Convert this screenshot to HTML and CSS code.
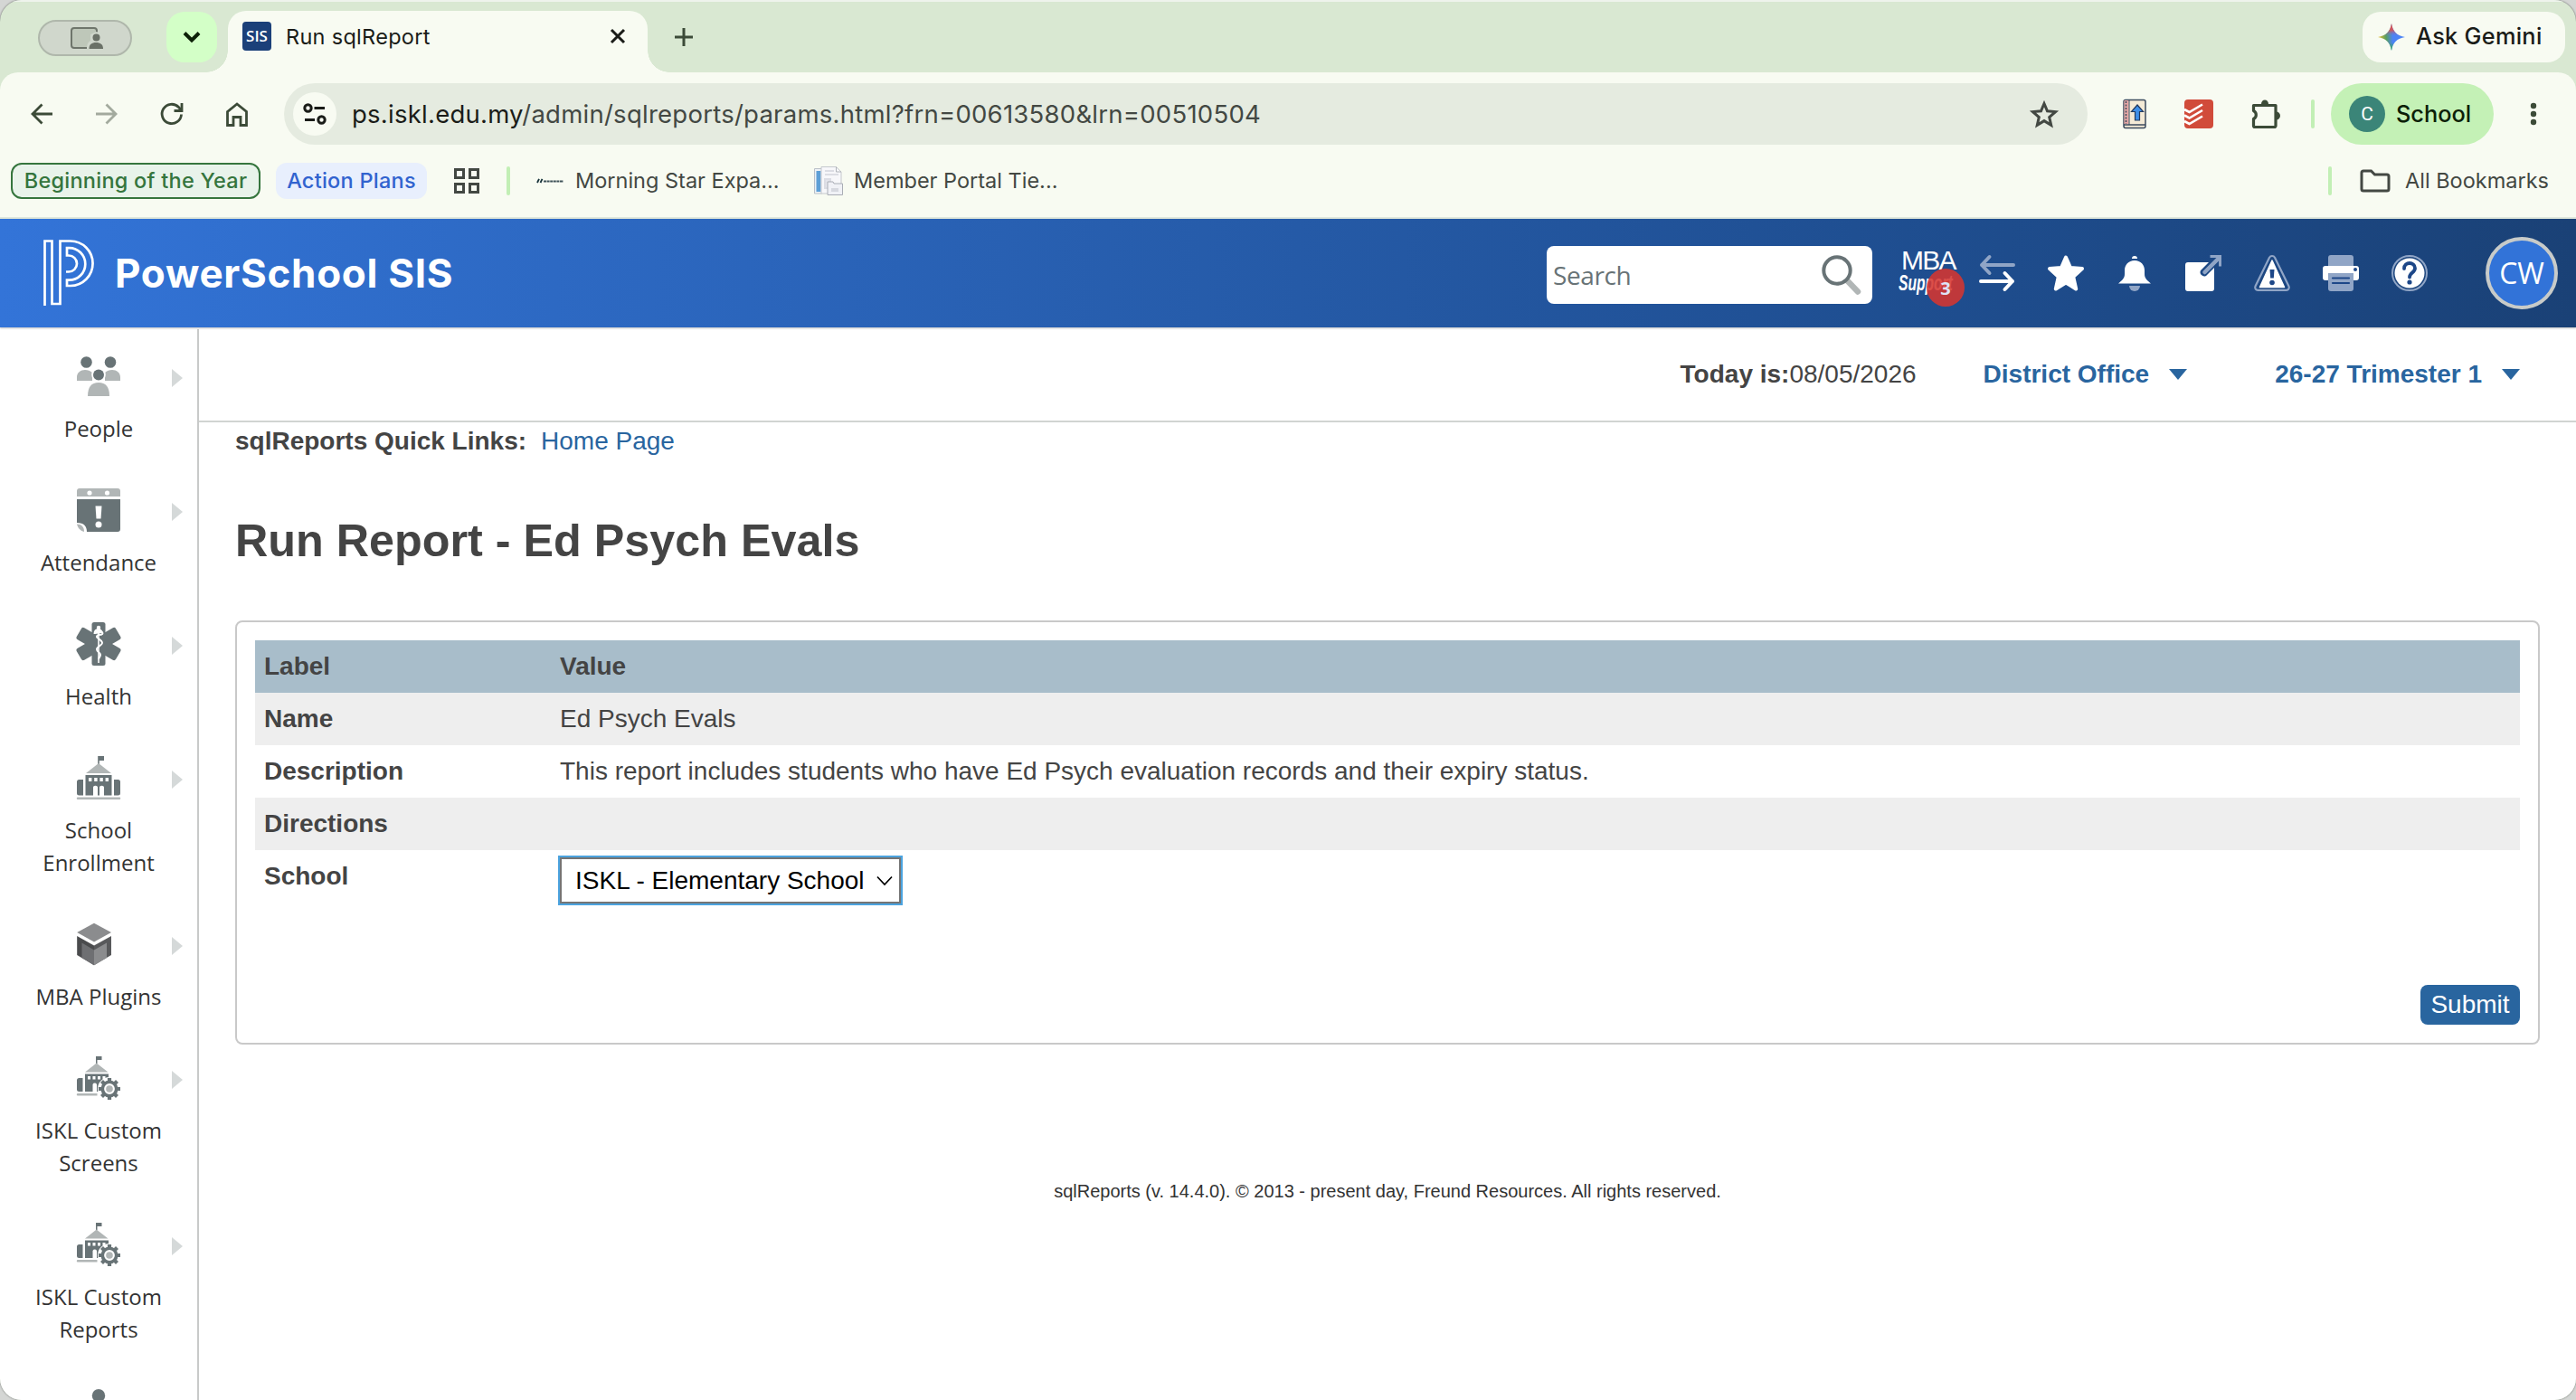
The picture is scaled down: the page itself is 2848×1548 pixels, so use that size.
FILE: index.html
```html
<!DOCTYPE html>
<html lang="en">
<head>
<meta charset="utf-8">
<title>Run sqlReport</title>
<link rel="stylesheet" href="styles.css">
</head>
<body>
<div class="window">
  <div class="tabstrip">
    <div class="share-pill"><svg width="36" height="24" viewBox="0 0 36 24"><path d="M29 6V4a3 3 0 0 0-3-3H4a3 3 0 0 0-3 3v16a3 3 0 0 0 3 3h14" fill="#bec7b9" stroke="#6e756b" stroke-width="2"/><path d="M18 24c0-6 2-8 4-9V8l7-3 6 4v15z" fill="#d0d7cc"/><circle cx="28.500" cy="11.500" r="4" fill="#6a7167"/><path d="M20.500 24c0-5 3-7 7.700-7s7.800 2 7.800 7z" fill="#6a7167"/></svg></div>
    <div class="tab-search"><svg width="20" height="14" viewBox="0 0 20 14"><path d="M2 2.500l8 8 8-8" fill="none" stroke="#0c2007" stroke-width="4"/></svg></div>
    <div class="tab">
      <span class="favicon">SIS</span>
      <span class="tab-title">Run sqlReport</span>
      <svg width="18" height="18" viewBox="0 0 18 18"><path d="M2 2l14 14M16 2L2 16" stroke="#1a1c18" stroke-width="3"/></svg>
    </div>
    <svg class="new-tab" width="20" height="20" viewBox="0 0 20 20"><path d="M10 0v20M0 10h20" stroke="#3c4b38" stroke-width="3"/></svg>
    <div class="gemini">
      <svg width="30" height="30" viewBox="0 0 30 30"><defs><linearGradient id="g1" x1="0" y1="0" x2="1" y2="0"><stop offset="0" stop-color="#f2c02e"/><stop offset=".3" stop-color="#5aa05c"/><stop offset=".55" stop-color="#4b83f5"/></linearGradient><linearGradient id="g2" x1="0" y1="0" x2="0" y2="1"><stop offset="0" stop-color="#f0443a"/><stop offset=".25" stop-color="#e5504a" stop-opacity=".8"/><stop offset=".48" stop-color="#4b83f5" stop-opacity="0"/><stop offset=".7" stop-color="#3aa757" stop-opacity="0"/><stop offset=".95" stop-color="#2fae4e"/></linearGradient></defs><path d="M15 0c1.500 9 6 13.500 15 15-9 1.500-13.500 6-15 15-1.500-9-6-13.500-15-15 9-1.500 13.500-6 15-15z" fill="url(#g1)"/><path d="M15 0c1.500 9 6 13.500 15 15-9 1.500-13.500 6-15 15-1.500-9-6-13.500-15-15 9-1.500 13.500-6 15-15z" fill="url(#g2)"/></svg>
      <span>Ask Gemini</span>
    </div>
  </div>

  <div class="toolbar">
    <svg class="back" width="24" height="24" viewBox="0 0 24 24"><path d="M24 12H2M12.500 1.500L2 12l10.500 10.500" fill="none" stroke="#3c4b38" stroke-width="2.800"/></svg>
    <svg class="forward" width="24" height="24" viewBox="0 0 24 24"><path d="M0 12h22M11.500 1.500L22 12 11.500 22.500" fill="none" stroke="#a3aa9e" stroke-width="2.800"/></svg>
    <svg class="reload" width="26" height="26" viewBox="0 0 26 26"><path d="M23.500 13.500A10.700 10.700 0 1 1 20.500 5.500L23 8.200" fill="none" stroke="#3c4b38" stroke-width="2.800"/><path d="M24 1v8.500h-8.500" fill="none" stroke="#3c4b38" stroke-width="2.800"/></svg>
    <svg class="home" width="26" height="28" viewBox="0 0 26 28"><path d="M2.500 11.500L13 3l10.500 8.500v15H17v-9H9v9H2.500z" fill="none" stroke="#3c4b38" stroke-width="2.800"/></svg>
    <div class="omnibox">
      <span class="site-info"><svg width="26" height="24" viewBox="0 0 26 24" fill="none" stroke="#1a1c18" stroke-width="3"><circle cx="5.500" cy="5.500" r="3.700"/><path d="M12.500 5.500H24M2 18.500h11"/><circle cx="20.500" cy="18.500" r="3.700"/></svg></span>
      <span class="url"><span class="host">ps.iskl.edu.my</span>/admin/sqlreports/params.html?frn=00613580&amp;lrn=00510504</span>
      <svg class="bookmark-star" width="32" height="30" viewBox="0 0 32 30"><path d="M16 3.500l3.500 8.300 9 .8-6.800 5.900 2 8.800L16 22.600l-7.700 4.700 2-8.800-6.800-5.900 9-.8z" fill="none" stroke="#434843" stroke-width="3"/></svg>
    </div>
    <svg class="ext-book" width="28" height="34" viewBox="0 0 28 34"><rect x="2" y="1.500" width="24" height="31" rx="2" fill="#f4ead6" stroke="#3b4a5e" stroke-width="1.500"/><path d="M2 29h24" stroke="#3b4a5e" stroke-width="1.500"/><rect x="2.500" y="2" width="5" height="26" fill="#e7a7a5"/><path d="M4.500 3v25" stroke="#3b4a5e" stroke-width="1.500" stroke-dasharray="2 1.500"/><path d="M8 2v27" stroke="#3b4a5e" stroke-width="1"/><path d="M17 7l6.500 7.500h-4V24h-5v-9.500h-4z" fill="#3f8fe8" stroke="#233a5e" stroke-width="1.200"/></svg>
    <svg class="ext-todo" width="32" height="32" viewBox="0 0 32 32"><rect width="32" height="32" rx="4" fill="#d14b3a"/><path d="M0 11l5.500 3L20 5.500M0 17.500l5.500 3L20 12M0 24l5.500 3L20 18.500" fill="none" stroke="#fff" stroke-width="2.600"/></svg>
    <svg class="ext-puzzle" width="34" height="34" viewBox="0 0 34 34"><path d="M3.500 7.500h24.500v22.500a1.500 1.500 0 0 1-1.500 1.500H5A1.500 1.500 0 0 1 3.500 30v-7.500a5 5 0 0 0 0-9z" fill="none" stroke="#3c4b38" stroke-width="3.200" stroke-linejoin="round"/><path d="M12 6a4 4.500 0 0 1 8 0zM28.500 14.500a4.500 4.500 0 0 1 0 9z" fill="#3c4b38"/></svg>
    <span class="divider"></span>
    <div class="profile"><span class="profile-dot">C</span><span>School</span></div>
    <svg class="kebab" width="8" height="26" viewBox="0 0 8 26" fill="#3c4b38"><circle cx="4" cy="4" r="3.200"/><circle cx="4" cy="13" r="3.200"/><circle cx="4" cy="22" r="3.200"/></svg>
  </div>

  <div class="bookmarks">
    <span class="chip chip-green">Beginning of the Year</span>
    <span class="chip chip-blue">Action Plans</span>
    <svg class="apps" width="28" height="28" viewBox="0 0 28 28" fill="none" stroke="#434843" stroke-width="3"><path d="M1.500 1.500h9v9h-9zM17.500 1.500h9v9h-9zM1.500 17.500h9v9h-9zM17.500 17.500h9v9h-9z"/></svg>
    <span class="divider"></span>
    <svg class="bm-morning" width="30" height="6" viewBox="0 0 30 6"><path d="M1 5L3 .8M4.500 5l2-4.200" stroke="#16323a" stroke-width="1.800"/><path d="M8 3.500h22" stroke="#3f5359" stroke-width="2" stroke-dasharray="3 .6"/></svg>
    <span class="bm-label bm-label-1">Morning Star Expa...</span>
    <svg class="bm-member" width="32" height="32" viewBox="0 0 32 32"><path d="M.5 2.500h8v27.500h-8z" fill="#eef2f6" stroke="#b9c0c8"/><path d="M2.500 5h5v23h-5z" fill="#5d9fd6"/><path d="M8 .5h16.500l5.500 5.500v24H8z" fill="#f7f7fa" stroke="#c5c8cd"/><path d="M24.500.5V6H30" fill="none" stroke="#b0b4ba"/><path d="M12 5h10M12 9h15M12 14h6v10h-6z" stroke="#dcdde4" stroke-width="2" fill="#e4e5ec"/><path d="M15 17h6l1 2h9.500v12.500H15z" fill="#f0f1f6" stroke="#a9adb5"/><path d="M19 24h8v4h-8z" fill="#d6d8df"/></svg>
    <span class="bm-label">Member Portal Tie...</span>
    <span class="divider divider-right"></span>
    <svg class="folder" width="34" height="26" viewBox="0 0 34 26"><path d="M2 22V4a2 2 0 0 1 2-2h8.500l4 4H30a2 2 0 0 1 2 2v14a2 2 0 0 1-2 2H4a2 2 0 0 1-2-2z" fill="none" stroke="#434843" stroke-width="3"/></svg>
    <span class="bm-label">All Bookmarks</span>
  </div>

  <header class="ps-header">
    <svg class="ps-logo" width="58" height="74" viewBox="0 0 58 74" fill="none" stroke="#fff" stroke-width="2.700"><path d="M1.500 73V1.500H9.500V71H18.500V1.500H29.800a24.700 24.700 0 0 1 0 49.500H26V44.700h2.500a17.800 17.800 0 0 0 0-35.600H26V17.500h2a9 9 0 0 1 0 18H25"/></svg>
    <span class="ps-title">PowerSchool SIS</span>
    <div class="search"><span>Search</span><svg width="44" height="44" viewBox="0 0 44 44"><path d="M28 28l12 12.500" stroke="#b1b6b6" stroke-width="6.500" stroke-linecap="round"/><circle cx="17" cy="17" r="14.700" fill="#fff" stroke="#687376" stroke-width="4"/></svg></div>
    <div class="mba"><span class="mba-top">MBA</span><span class="mba-sub">Support</span><span class="mba-badge">3</span></div>
    <svg class="hi hi-swap" viewBox="0 0 40 40" fill="none" stroke-width="4" stroke-linecap="round" stroke-linejoin="round"><path d="M38 11H3M11.500 2L3 11l8.500 9" stroke="#90a5c6"/><path d="M2 29h35M28.500 20l8.500 9-8.500 9" stroke="#fff"/></svg>
    <svg class="hi" viewBox="0 0 40 40"><path d="M20 2.500l5 11.500 13 1-9.800 9 3 13.500L20 30.500l-11.200 7 3-13.500L2 15l13-1z" fill="#fff" stroke="#fff" stroke-width="4" stroke-linejoin="round"/></svg>
    <svg class="hi" viewBox="0 0 40 40"><path d="M17 4a3 3 0 0 1 6 0zM20 6c7 0 11 5 11 11v4c0 5 3 7 7 10.500H2C6 28 9 26 9 21v-4C9 11 13 6 20 6z" fill="#fff"/><path d="M14 34h12a6 6 0 0 1-12 0z" fill="#90a5c6"/></svg>
    <svg class="hi" viewBox="0 0 40 40"><path d="M3 8h23L17 17a4.500 4.500 0 0 0 6 6l9-9v23a3 3 0 0 1-3 3H3a3 3 0 0 1-3-3V11a3 3 0 0 1 3-3z" fill="#fff"/><path d="M21.500 19L37 3.500" stroke="#90a5c6" stroke-width="4.500" stroke-linecap="round"/><path d="M27.500 1.500h11v11" fill="none" stroke="#90a5c6" stroke-width="3"/></svg>
    <svg class="hi" viewBox="0 0 40 40"><path d="M17 2.700a3.500 3.500 0 0 1 6 0L38.500 34.500a3 3 0 0 1-3 4.300h-31a3 3 0 0 1-3-4.300z" fill="none" stroke="#90a5c6" stroke-width="2.200"/><path d="M20 6L6.500 35.500h27z" fill="#fff" stroke="#fff" stroke-width="1.500" stroke-linejoin="round"/><path d="M17.500 16h5l-.7 9.500h-3.600z" fill="#1d4788"/><circle cx="20" cy="30.500" r="2.800" fill="#1d4788"/></svg>
    <svg class="hi" viewBox="0 0 40 40"><path d="M6 13V3a3 3 0 0 1 3-3h22a3 3 0 0 1 3 3v10z" fill="#90a5c6"/><path d="M3 12h34a3 3 0 0 1 3 3v10a3 3 0 0 1-3 3H3a3 3 0 0 1-3-3V15a3 3 0 0 1 3-3z" fill="#fff"/><circle cx="36" cy="16" r="2" fill="#1d4788"/><path d="M6 20h28v17a3 3 0 0 1-3 3H9a3 3 0 0 1-3-3z" fill="#90a5c6"/><path d="M11 25.500h18M11 31h18" stroke="#1d4788" stroke-width="2.200" stroke-linecap="round"/></svg>
    <svg class="hi" viewBox="0 0 40 40"><circle cx="20" cy="20" r="19" fill="none" stroke="#90a5c6" stroke-width="2"/><circle cx="20" cy="20" r="16.500" fill="#fff"/><path d="M14 15c0-4 3-6 6-6s6 2 6 5.500c0 5-6 5-6 10" fill="none" stroke="#1d4788" stroke-width="3.800" stroke-linecap="round"/><circle cx="20" cy="30" r="2.600" fill="#1d4788"/></svg>
    <span class="user">CW</span>
  </header>

  <div class="body">
    <nav class="side">
      <a class="item"><svg class="ic" viewBox="0 0 48 48"><g fill="#b1b6b6"><path d="M0 29v-4c0-5 4-8 9-8 3 0 6 1 8 3v9zM48 29v-4c0-5-4-8-9-8-3 0-6 1-8 3v9z"/></g><g fill="#687376"><circle cx="10.500" cy="8.500" r="6.300"/><circle cx="37" cy="8.500" r="6.300"/><circle cx="24" cy="22.500" r="7.800" fill="#fff"/><circle cx="24" cy="22.500" r="6"/></g><path d="M12 46c0-10 4-15 12-15s12 5 12 15z" fill="#b1b6b6"/></svg><span class="lbl">People</span><i></i></a>
      <a class="item"><svg class="ic" viewBox="0 0 48 48"><path d="M0 9V3a3 3 0 0 1 3-3h42a3 3 0 0 1 3 3v6z" fill="#b1b6b6"/><circle cx="14" cy="5" r="2.600" fill="#fff"/><circle cx="33.500" cy="5" r="2.600" fill="#fff"/><path d="M0 12h48v33a3 3 0 0 1-3 3H11c0-6-3-10-11-10z" fill="#687376"/><path d="M0 39.500c5 0 8 3 8 8.500C4 47 1 44 0 39.500z" fill="#b1b6b6"/><path d="M20.500 19.500h7l-1 14h-5z" fill="#fff"/><circle cx="24" cy="40" r="3.500" fill="#fff"/></svg><span class="lbl">Attendance</span><i></i></a>
      <a class="item"><svg class="ic" viewBox="0 0 48 48"><g fill="#687376"><rect x="16.500" y="0" width="15" height="48" rx="2.500"/><rect x="16.500" y="-1" width="15" height="50" rx="2.500" transform="rotate(60 24 24)"/><rect x="16.500" y="-1" width="15" height="50" rx="2.500" transform="rotate(-60 24 24)"/></g><path d="M24 6v39" stroke="#fff" stroke-width="1.600"/><path d="M19.500 13c0-4 2-5 4.500-5M27 10c3 3 1 4-3 4-2 1-3 2-1 3.500s5 3 5 5.500-6 4-6 7 4 3.500 4 6-2 3-2 5" fill="none" stroke="#fff" stroke-width="2"/><circle cx="24" cy="6" r="2.200" fill="#fff"/><path d="M20 13c0-4 2-6 4-6s4.500 2 4.500 5z" fill="#fff"/></svg><span class="lbl">Health</span><i></i></a>
      <a class="item"><svg class="ic" viewBox="0 0 48 48"><path d="M23.200 0H30v5h-5.200v4h-1.600z" fill="#687376"/><path d="M24 8l14 11H10zM1 45.500h46a1 1 0 0 1 0 2.500H1a1 1 0 0 1 0-2.500z" fill="#b1b6b6"/><path d="M9.500 21h29v22.500H30V34a3 3 0 0 0-5 0v9.500h-2V34a3 3 0 0 0-5 0v9.500H9.500zM2.500 26H7v17.500H2.500A2.500 2.500 0 0 1 0 41V28.500A2.500 2.500 0 0 1 2.500 26zM41 26h4.500a2.500 2.500 0 0 1 2.500 2.500V41a2.500 2.500 0 0 1-2.500 2.500H41z" fill="#687376"/><path d="M13 24h3.400v4H13zm6.200 0h3.400v4h-3.400zm6.200 0h3.400v4h-3.400zm6.200 0H35v4h-3.400z" fill="#fff"/></svg><span class="lbl">School<br>Enrollment</span><i></i></a>
      <a class="item"><svg class="ic" viewBox="0 0 48 48"><path d="M19 .8L38 11 19 21.500 .2 11z" fill="#8b8c8e"/><path d="M.2 15L19 25.500v21.700L.2 36z" fill="#4a4b4d"/><path d="M38 15L19 25.500v21.700L38 36z" fill="#58595b"/><path d="M5.500 22.500L19 30.500v16.700L5.500 39z" fill="#6e6f72"/><path d="M33 22.500l-14 8v16.700L33 39z" fill="#8b8c8e"/></svg><span class="lbl">MBA Plugins</span><i></i></a>
      <a class="item"><svg class="ic" viewBox="0 0 48 48"><g id="custom"><path d="M21 0h6.500v4H22.500v4H21z" fill="#687376"/><path d="M21.700 7.500L34.500 17.500H9zM1 41h21.500v2.500H1a1 1 0 0 1 0-2.500z" fill="#b1b6b6"/><path d="M9 19.500h26v8l-9 6v5.500h-4V31a2.500 2.500 0 0 0-4.500 0v8H9zM2.500 24H6.500v15h-4A2.500 2.500 0 0 1 0 36.500v-10A2.500 2.500 0 0 1 2.500 24z" fill="#687376"/><path d="M12 22h3v3.500h-3zm5.500 0h3v3.500h-3zm5.500 0h3v3.500h-3zm5.500 0h3v3.500h-3z" fill="#fff"/><circle cx="36" cy="36" r="13" fill="#fff"/><path d="M36 24v24M24 36h24M27.500 27.500l17 17M44.500 27.500l-17 17" stroke="#687376" stroke-width="4.200"/><circle cx="36" cy="36" r="7.700" fill="#fff" stroke="#687376" stroke-width="3.600"/><circle cx="36" cy="36" r="3.800" fill="#b1b6b6"/></g></svg><span class="lbl">ISKL Custom<br>Screens</span><i></i></a>
      <a class="item"><svg class="ic" viewBox="0 0 48 48"><use href="#custom"/></svg><span class="lbl">ISKL Custom<br>Reports</span><i></i></a>
      <a class="item"><svg class="ic" viewBox="0 0 48 48"><circle cx="24" cy="7.200" r="7.200" fill="#687376"/></svg></a>
    </nav>

    <main class="main">
      <div class="context">
        <span class="today"><b>Today is:</b>08/05/2026</span>
        <a class="ctx ctx-school">District Office<i></i></a>
        <a class="ctx ctx-term">26-27 Trimester 1<i></i></a>
      </div>
      <div class="content">
        <div class="quick"><b>sqlReports Quick Links:</b><a>Home Page</a></div>
        <h1>Run Report - Ed Psych Evals</h1>
        <section class="box">
          <table>
            <tr class="head"><th>Label</th><th>Value</th></tr>
            <tr class="alt"><th>Name</th><td>Ed Psych Evals</td></tr>
            <tr><th>Description</th><td>This report includes students who have Ed Psych evaluation records and their expiry status.</td></tr>
            <tr class="alt"><th>Directions</th><td></td></tr>
            <tr class="last"><th>School</th><td><div class="select"><span>ISKL - Elementary School</span><svg width="20" height="12" viewBox="0 0 20 12"><path d="M2 1.500l8 8.500 8-8.500" fill="none" stroke="#000" stroke-width="1.700"/></svg></div></td></tr>
          </table>
          <div class="actions"><button>Submit</button></div>
        </section>
        <footer>sqlReports (v. 14.4.0). © 2013 - present day, Freund Resources. All rights reserved.</footer>
      </div>
    </main>
  </div>
</div>
</body>
</html>
```
FILE: styles.css
```css
* { box-sizing: border-box; }
html, body { margin: 0; height: 100%; }
body { background: #d4d6d4; overflow: hidden; font-family: "Liberation Sans", Arial, sans-serif; color: #444; }
svg { display: block; flex: none; overflow: visible; }
.window { width: 2848px; height: 1548px; border-radius: 24px; overflow: hidden; background: #d9e8d2; display: flex; flex-direction: column; box-shadow: 0 0 2px #555; }

.tabstrip, .toolbar, .bookmarks { font-family: Inter, "Liberation Sans", sans-serif; display: flex; align-items: center; flex: none; }

/* tab strip */
.tabstrip { height: 80px; padding: 0 12px 0 42px; border-top: 2px solid #eef3ec; }
.tabstrip > * { flex: none; }
.share-pill { width: 104px; height: 40px; border-radius: 20px; background: #d0d7cc; border: 2px solid #afb7ab; display: flex; align-items: center; justify-content: center; margin-top: 2px; }
.share-pill svg { margin-left: 3px; }
.tab-search { width: 56px; height: 56px; border-radius: 20px; background: #d3ffc7; margin-left: 38px; display: flex; align-items: center; justify-content: center; }
.tab { position: relative; width: 464px; height: 68px; margin: 10px 0 0 12px; background: #f8fbf2; border-radius: 20px 20px 0 0; display: flex; align-items: center; padding: 0 24px 12px 16px; }
.tab::before, .tab::after { content: ""; position: absolute; bottom: 0; width: 24px; height: 24px; }
.tab::before { left: -24px; background: radial-gradient(circle at 0 0, transparent 23.5px, #f8fbf2 24px); }
.tab::after { right: -24px; background: radial-gradient(circle at 100% 0, transparent 23.5px, #f8fbf2 24px); }
.favicon { width: 32px; height: 32px; border-radius: 4px; background: #1b4079; color: #fff; font: 600 17px/32px "Open Sans", sans-serif; text-align: center; }
.tab-title { flex: 1; margin-left: 16px; padding-top: 2px; font-size: 23.5px; line-height: 30px; letter-spacing: .3px; color: #1a1c18; }
.new-tab { margin-left: 30px; }
.gemini { margin-left: auto; width: 224px; height: 56px; border-radius: 20px; background: #f8fbf2; display: flex; align-items: center; padding-left: 17px; gap: 12px; font-weight: 500; font-size: 25.3px; line-height: 30px; letter-spacing: .3px; color: #1a1c18; }
.gemini span { padding-bottom: 2px; }

/* toolbar */
.toolbar { height: 92px; background: #f8fbf2; border-radius: 20px 20px 0 0; padding-left: 34px; }
.toolbar > * { flex: none; }
.forward { margin-left: 48px; }
.reload { margin-left: 47px; }
.home { margin-left: 46px; }
.omnibox { width: 1994px; height: 68px; border-radius: 34px; background: #e5ebe0; display: flex; align-items: center; padding: 0 32px 0 10px; margin-left: 39px; }
.site-info { width: 48px; height: 48px; border-radius: 50%; background: #f8fbf2; display: flex; align-items: center; justify-content: center; }
.url { margin-left: 17px; font-size: 27.5px; line-height: 34px; letter-spacing: .25px; color: #434843; white-space: nowrap; }
.host { color: #1a1c18; }
.bookmark-star { margin-left: auto; }
.ext-book { margin-left: 38px; }
.ext-todo { margin-left: 41px; }
.ext-puzzle { margin-left: 41px; }
.divider { width: 4px; height: 32px; border-radius: 2px; background: #c2efb5; flex: none; }
.toolbar .divider { margin-left: 33px; }
.profile { width: 180px; height: 68px; border-radius: 34px; background: #c4f1b6; margin-left: 18px; display: flex; align-items: center; padding-left: 20px; gap: 12px; font-weight: 500; font-size: 25.3px; line-height: 30px; color: #0c2007; }
.profile-dot { width: 40px; height: 40px; border-radius: 50%; background: #3b8578; color: #fff; font: 400 21px/40px Roboto, sans-serif; text-align: center; }
.kebab { margin-left: 40px; }

/* bookmarks bar */
.bookmarks { height: 70px; background: #f8fbf2; padding: 0 30px 12px 12px; font-size: 23.5px; line-height: 30px; color: #434843; border-bottom: 2px solid #dfe7dc; }
.bookmarks > * { flex: none; }
.chip { height: 40px; border-radius: 12px; display: flex; align-items: center; justify-content: center; font-weight: 500; letter-spacing: .25px; white-space: nowrap; }
.chip-green { width: 276px; background: #e8f3ea; border: 2px solid #35753d; color: #35753d; }
.chip-blue { width: 167px; background: #e8effd; color: #3163cf; margin-left: 17px; }
.apps { margin-left: 30px; }
.bookmarks .divider { margin-left: 30px; }
.bm-morning { margin-left: 29px; }
.bm-label { white-space: nowrap; margin-left: 12px; }
.bm-label-1 { width: 264px; margin-left: 13px; }
.bookmarks .divider-right { margin-left: auto; }
.folder { margin-left: 31px; }
.folder + .bm-label { margin-left: 16px; }

/* application header */
.ps-header { height: 120px; flex: none; background: linear-gradient(90deg, #3374d8, #1f4f92 72%, #1a4176); display: flex; align-items: center; padding: 0 20px 8px 48px; position: relative; z-index: 1; box-shadow: 0 1px 2px rgba(0,0,0,.25); }
.ps-logo { margin-top: 8px; }
.ps-title { font: 700 44px/56px Inter, sans-serif; letter-spacing: .7px; color: #fff; margin-left: 21px; width: 1583px; padding-top: 7px; white-space: nowrap; }
.search { width: 360px; height: 64px; border-radius: 8px; background: #fff; display: flex; align-items: center; justify-content: space-between; padding: 0 12px 0 7px; font: 28px/40px "Open Sans", sans-serif; letter-spacing: -.4px; color: #687376; margin-top: 12px; }
.mba { position: relative; width: 60px; height: 60px; margin: 14px 0 0 29px; color: #fff; display: flex; flex-direction: column; align-items: flex-start; }
.mba-top { font-size: 30px; line-height: 26px; letter-spacing: -1.8px; margin-left: 3px; }
.mba-sub { font: italic 700 24px/24px "Liberation Sans", sans-serif; transform: scaleX(.65); transform-origin: 0 0; }
.mba-badge { position: absolute; left: 31px; top: 22px; width: 42px; height: 42px; border-radius: 50%; background: rgba(214,54,48,.88); font: 700 20px/44px "Open Sans", sans-serif; text-align: center; color: #dfe3f5; }
.hi { width: 40px; height: 40px; margin: 8px 0 0 36px; }
.hi-swap { margin-left: 29px; }
.user { width: 80px; height: 80px; border-radius: 50%; border: 4px solid #c8cbc9; background: #3273d8; color: #fff; font: 32px/72px "Open Sans", sans-serif; text-align: center; margin: 8px 0 0 64px; }

/* page body */
.body { flex: 1; display: flex; background: #fff; padding-top: 2px; min-height: 0; }
.side { width: 220px; flex: none; border-right: 2px solid #c8cac9; overflow: hidden; display: flex; flex-direction: column; }
.item { position: relative; display: flex; flex-direction: column; align-items: center; padding: 28px 0 20px; gap: 16px; flex: none; }
.ic { width: 48px; height: 48px; }
.lbl { font: 24px/36px "Open Sans", sans-serif; color: #333; text-align: center; }
.item i { position: absolute; right: 16px; top: 44px; border: 10px solid transparent; border-left: 12px solid #d5d9d9; border-right: 0; }
.main { flex: 1; min-width: 0; display: flex; flex-direction: column; }
.context { height: 103px; border-bottom: 2px solid #d1d4d2; display: flex; align-items: center; justify-content: flex-end; padding: 0 62px 2px 0; font-size: 28px; line-height: 34px; color: #444; }
.ctx { display: flex; align-items: center; color: #29659f; font-weight: 700; }
.ctx i { border: 10px solid transparent; border-top: 12px solid #29659f; border-bottom: 0; margin-left: 22px; }
.ctx-school { margin-left: 74px; }
.ctx-term { margin-left: 97px; }
.content { padding: 5px 40px 0; display: flex; flex-direction: column; }
.quick { font-size: 28px; line-height: 32px; display: flex; gap: 16px; }
.quick a { color: #29659f; }
h1 { margin: 64px 0 0; font-size: 50.3px; line-height: 60px; }
.box { margin-top: 58px; height: 469px; border: 2px solid #c9c9c9; border-radius: 8px; padding: 20px; display: flex; flex-direction: column; }
table { width: 100%; border-collapse: collapse; font-size: 28px; line-height: 34px; }
th, td { text-align: left; padding: 12px 10px; height: 58px; vertical-align: top; }
th:first-child { width: 327px; }
.head { background: #a8bdca; }
.alt { background: #eee; }
.last td { padding: 8px 10px; }
.select { width: 377px; height: 51px; border: 2px solid #757575; outline: 2px solid #4ba3df; color: #000; display: flex; align-items: center; justify-content: space-between; padding: 0 6px 0 15px; }
.actions { display: flex; justify-content: flex-end; margin-top: auto; }
button { width: 110px; height: 44px; border: 0; border-radius: 8px; background: #29659f; color: #fff; font: 28px/34px "Liberation Sans", sans-serif; padding: 0; }
footer { text-align: center; font-size: 20px; line-height: 24px; margin-top: 150px; color: #333; }
```
